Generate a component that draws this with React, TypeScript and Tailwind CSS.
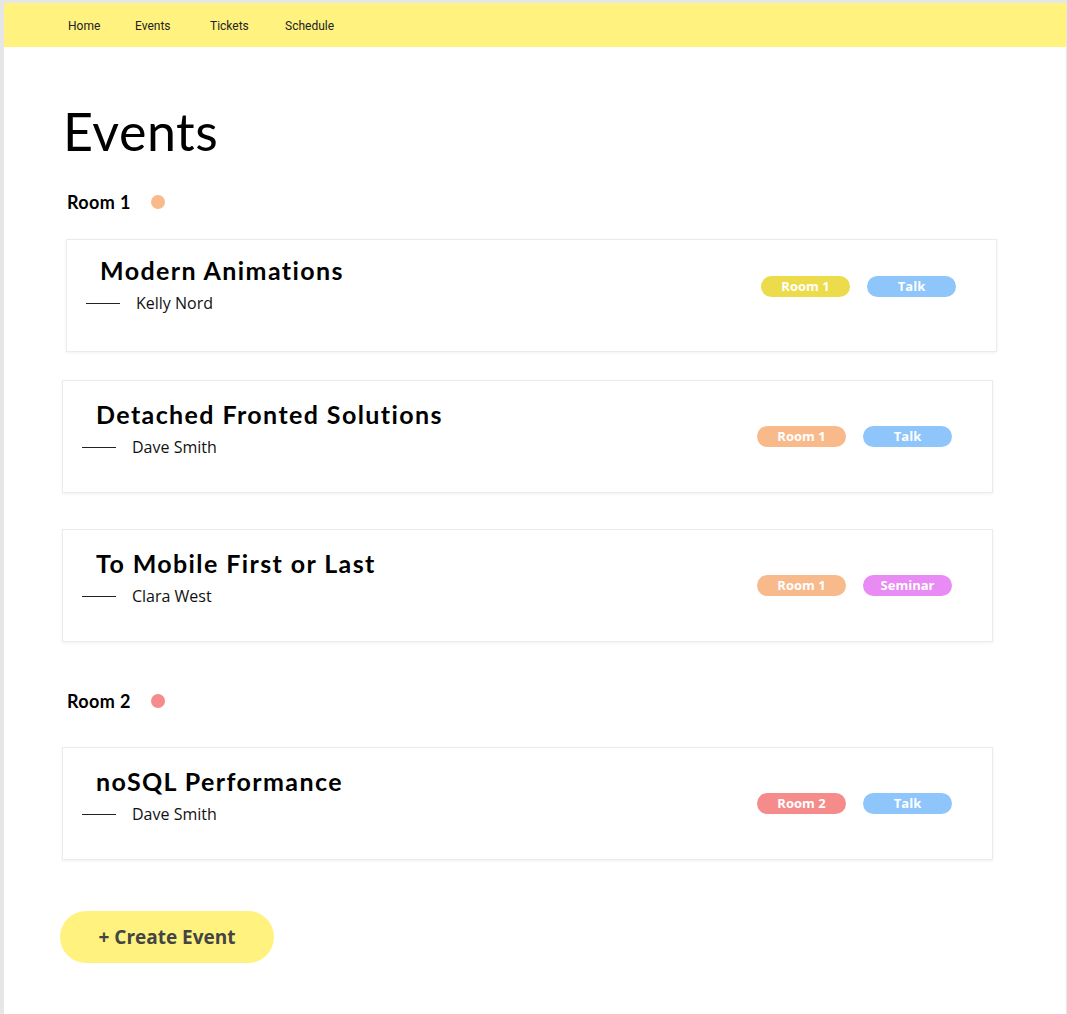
import React from "react"

type Tag = { label: string; color: string }

type EventItem = {
  title: string
  speaker: string
  tags: Tag[]
  lifted?: boolean
}

const heading = { fontFamily: "Lato, 'Noto Sans', sans-serif" }
const body = { fontFamily: "'Open Sans', 'Noto Sans', sans-serif" }

const room1: EventItem[] = [
  {
    title: "Modern Animations",
    speaker: "Kelly Nord",
    lifted: true,
    tags: [
      { label: "Room 1", color: "bg-[#ecdb4b]" },
      { label: "Talk", color: "bg-[#8ec5fb]" },
    ],
  },
  {
    title: "Detached Fronted Solutions",
    speaker: "Dave Smith",
    tags: [
      { label: "Room 1", color: "bg-[#f8b98b]" },
      { label: "Talk", color: "bg-[#8ec5fb]" },
    ],
  },
  {
    title: "To Mobile First or Last",
    speaker: "Clara West",
    tags: [
      { label: "Room 1", color: "bg-[#f8b98b]" },
      { label: "Seminar", color: "bg-[#e98bf5]" },
    ],
  },
]

const room2: EventItem[] = [
  {
    title: "noSQL Performance",
    speaker: "Dave Smith",
    tags: [
      { label: "Room 2", color: "bg-[#f58b8b]" },
      { label: "Talk", color: "bg-[#8ec5fb]" },
    ],
  },
]

function EventCard({ item, className }: { item: EventItem; className?: string }) {
  return (
    <div
      className={`flex h-[113px] w-[931px] items-start justify-between border border-[#ebebeb] bg-white shadow-[0_1px_3px_rgba(0,0,0,0.06)] ${
        item.lifted ? "ml-[4px]" : ""
      } ${className ?? ""}`}
    >
      <div className={`flex flex-col pl-[19px] ${item.lifted ? "pt-[14px]" : "pt-[17px]"}`}>
        <h3
          className="ml-[14px] text-[25px] font-bold leading-[32px] tracking-[1.4px] text-black"
          style={heading}
        >
          {item.title}
        </h3>
        <div className="mt-[3px] flex items-center">
          <span className="h-px w-[34px] bg-[#222]" />
          <span className="ml-[16px] text-[16px] leading-[28px] text-[#111]" style={body}>
            {item.speaker}
          </span>
        </div>
      </div>
      <div className={`mr-[40px] flex gap-[17px] ${item.lifted ? "mt-[36px]" : "mt-[45px]"}`}>
        {item.tags.map((t) => (
          <span
            key={t.label}
            className={`flex h-[21px] w-[89px] items-center justify-center rounded-full text-[13px] font-bold text-white ${t.color}`}
            style={body}
          >
            {t.label}
          </span>
        ))}
      </div>
    </div>
  )
}

function RoomLabel({ name, dot }: { name: string; dot: string }) {
  return (
    <div className="ml-[5px] flex items-center">
      <span className="text-[18px] font-bold leading-[24px] tracking-[0.4px] text-black" style={heading}>
        {name}
      </span>
      <span className={`ml-[20px] h-[14px] w-[14px] rounded-full ${dot}`} />
    </div>
  )
}

export default function App() {
  return (
    <div className="min-h-screen bg-[#e6e6e6] pl-[4px] pr-[1px] pt-[3px]">
      <div className="min-h-[1011px] bg-white">
        <nav
          className="flex h-[44px] items-center bg-[#fff27f] pl-[64px] pt-[1px] text-[12px] text-[#222]"
          style={{ fontFamily: "Roboto, sans-serif" }}
        >
          <a className="w-[67px]">Home</a>
          <a className="w-[75px]">Events</a>
          <a className="w-[75px]">Tickets</a>
          <a>Schedule</a>
        </nav>

        <main className="flex flex-col pl-[58px]">
          <h1 className="mt-[52px] ml-[1px] text-[52px] font-normal leading-[64px] tracking-[0.5px] text-black" style={heading}>
            Events
          </h1>

          <div className="mt-[27px]">
            <RoomLabel name="Room 1" dot="bg-[#f8b98b]" />
          </div>

          <EventCard item={room1[0]} className="mt-[25px]" />
          <EventCard item={room1[1]} className="mt-[28px]" />
          <EventCard item={room1[2]} className="mt-[36px]" />

          <div className="mt-[47px]">
            <RoomLabel name="Room 2" dot="bg-[#f58b8b]" />
          </div>

          <EventCard item={room2[0]} className="mt-[34px]" />

          <button
            className="ml-[-2px] mt-[51px] flex h-[52px] w-[214px] items-center justify-center rounded-full bg-[#fff27f] text-[19px] font-bold text-[#444]"
            style={body}
          >
            + Create Event
          </button>
        </main>
      </div>
    </div>
  )
}
